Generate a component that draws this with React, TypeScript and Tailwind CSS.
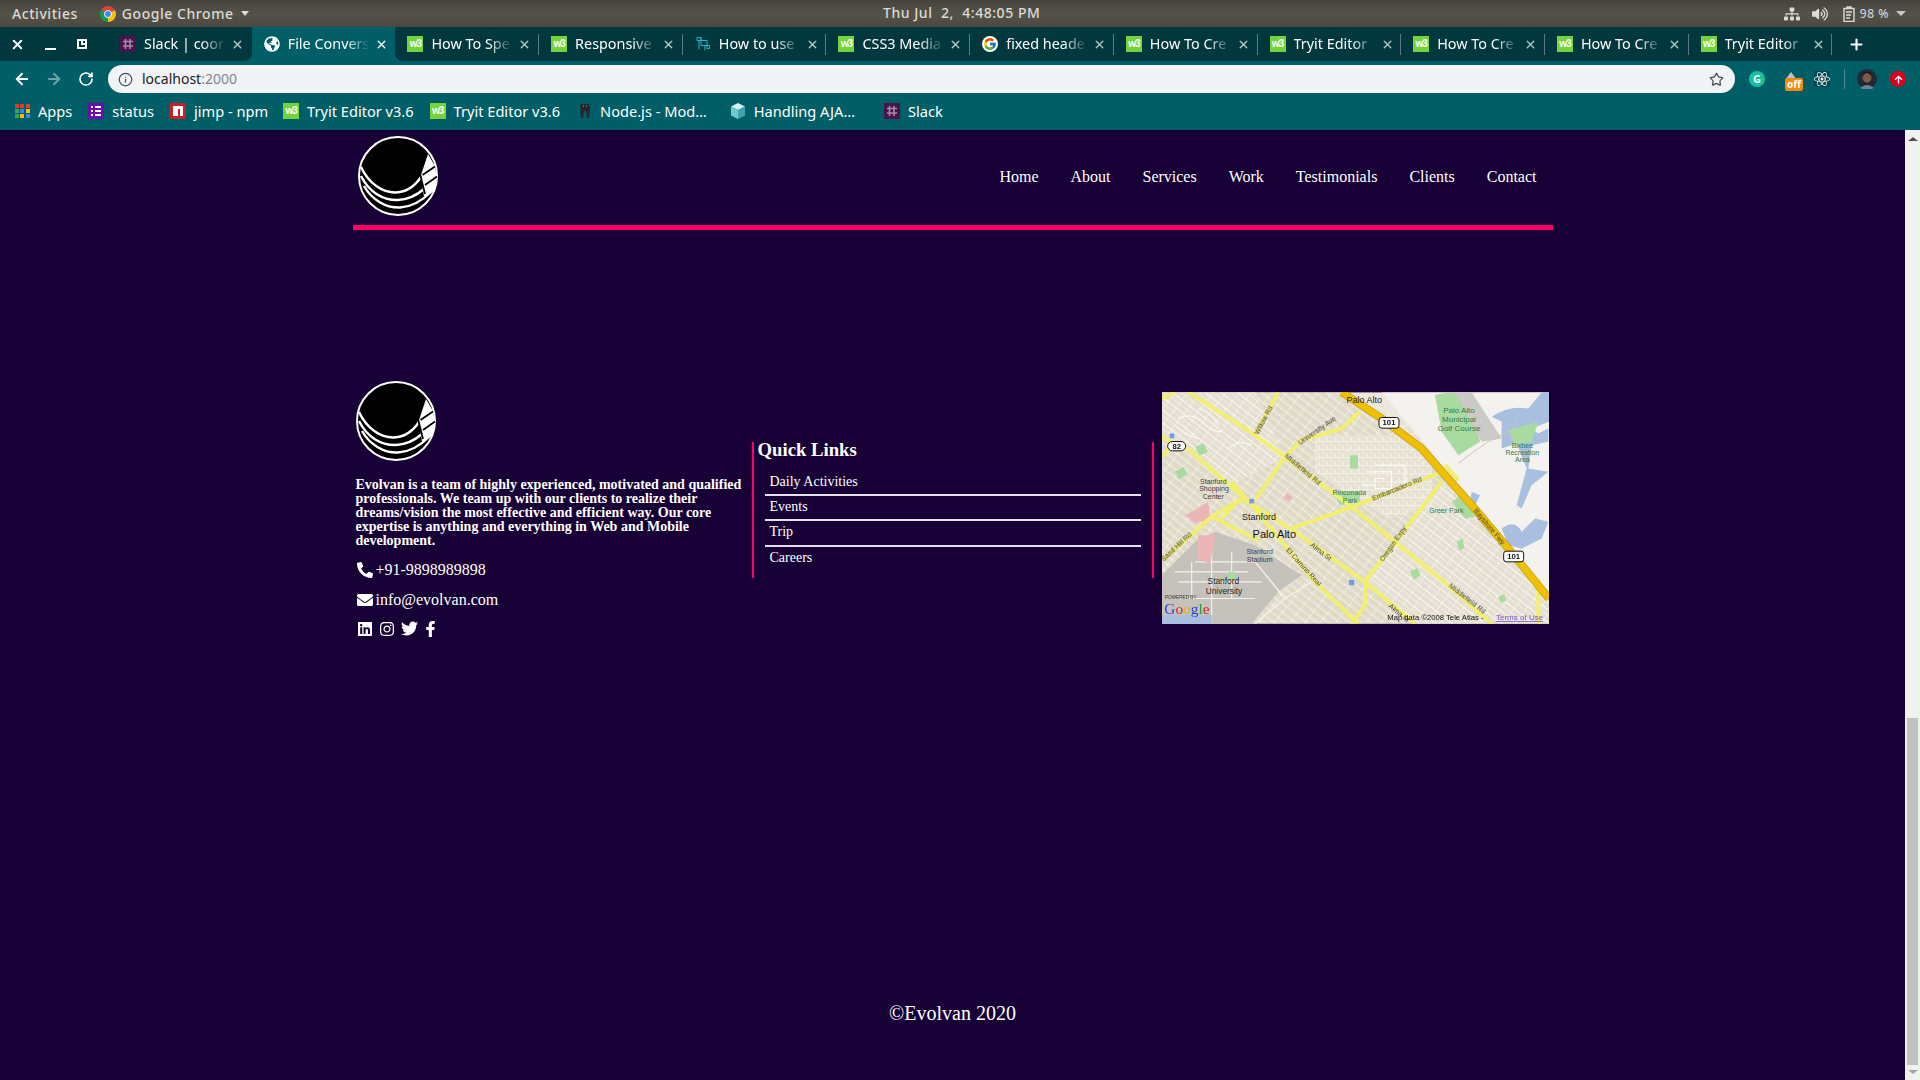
import React from "react";
import { FaPhoneAlt, FaEnvelope, FaLinkedin, FaInstagram, FaTwitter, FaFacebookF, FaReact, FaGlobeAmericas, FaVolumeUp, FaSitemap, FaArrowUp } from "react-icons/fa";
import { FcGoogle } from "react-icons/fc";
import { ArrowLeft, ArrowRight, RotateCw, Info, Star, X, Plus } from "lucide-react";

const W3 = () => (
  <span className="w-4 h-4 shrink-0 bg-[#73d53a] text-white text-[10px] font-bold leading-[15px] text-center tracking-[-1px] [font-family:'Liberation_Sans',sans-serif]">w3</span>
);
const SlackIcon = () => (
  <svg viewBox="0 0 16 16" className="w-4 h-4 shrink-0">
    <rect width="16" height="16" fill="#4a154b" />
    <path d="M5.5 3v10M10 3v10M3 5.5h10M3 10h10" stroke="#a58aa6" strokeWidth="1.6" />
  </svg>
);
const ChromeIcon = () => (
  <svg viewBox="0 0 16 16" className="w-4 h-4 shrink-0">
    <path d="M8 8 L1.1 4 A8 8 0 0 1 14.9 4 Z" fill="#db4437" />
    <path d="M8 8 L14.9 4 A8 8 0 0 1 8 16 Z" fill="#f4c20d" />
    <path d="M8 8 L8 16 A8 8 0 0 1 1.1 4 Z" fill="#0f9d58" />
    <circle cx="8" cy="8" r="3.8" fill="#fff" />
    <circle cx="8" cy="8" r="2.9" fill="#4285f4" />
  </svg>
);
const TreeIcon = () => (
  <svg viewBox="0 0 16 16" className="w-4 h-4 shrink-0" fill="none" stroke="#26b3c4" strokeWidth="1">
    <path d="M2 1.5h4v8h4v5M6 1.5v3h6v8h2.5v-3H10M2 1.5v3h4M4 4.5v9" />
  </svg>
);
const Logo = () => (
  <svg viewBox="0 0 80 80" className="w-20 h-20 shrink-0">
    <circle cx="40" cy="40" r="39" fill="#000" stroke="#fff" strokeWidth="2" />
    <path d="M63 39L70 18 77 30 79 42 76 55 66 61Z" fill="#fff" />
    <g fill="none" stroke="#fff" strokeWidth="2.4">
      <path d="M3 31C11 48 25 57 38 56.500C48 56 57 50 63 41" />
      <path d="M3 40C11 56 25 64.500 40 64C50 63.500 59 59 66 53" />
      <path d="M6 50C14 64 28 72 42 71.500C54 71 65 64 74 55" />
    </g>
    <g fill="none" stroke="#000" strokeWidth="1.8">
      <path d="M62 38L67 58" />
      <path d="M64.500 39L77 30.500" />
      <path d="M67 49L79 40.500" />
    </g>
  </svg>
);

const tabs: [React.ReactNode, string, string][] = [
  [<SlackIcon />, "Slack | coor", ""],
  [<FaGlobeAmericas className="w-4 h-4 shrink-0 text-white" />, "File Convers", "active"],
  [<W3 />, "How To Spe", ""],
  [<W3 />, "Responsive", ""],
  [<TreeIcon />, "How to use", ""],
  [<W3 />, "CSS3 Media", ""],
  [<span className="w-4 h-4 shrink-0 rounded-full bg-white flex items-center justify-center"><FcGoogle className="w-[14px] h-[14px]" /></span>, "fixed heade", ""],
  [<W3 />, "How To Cre", ""],
  [<W3 />, "Tryit Editor", ""],
  [<W3 />, "How To Cre", ""],
  [<W3 />, "How To Cre", ""],
  [<W3 />, "Tryit Editor", ""],
];

function TopBar() {
  return (
    <div className="h-[27px] shrink-0 flex items-center bg-gradient-to-b from-[#45433e] via-[#55524a] to-[#4c4942] text-[#dcdad3] text-[14px] font-medium tracking-[0.55px] pl-3 pr-[14px] relative [font-family:'Noto_Sans',sans-serif]">
      <span>Activities</span>
      <span className="ml-[22px] flex items-center gap-[6px]">
        <ChromeIcon />
        <span>Google Chrome</span>
        <span className="w-0 h-0 border-x-[4px] border-x-transparent border-t-[5px] border-t-[#dcdad3] ml-[1px]" />
      </span>
      <span className="absolute left-[883px] top-[4px] leading-[18px]">Thu Jul &nbsp;2, &nbsp;4:48:05 PM</span>
      <span className="ml-auto flex items-center">
        <FaSitemap className="w-[16px] h-[16px] text-[#dcdad3]" />
        <FaVolumeUp className="w-[16px] h-[16px] ml-[12px] text-[#dcdad3]" />
        <svg viewBox="0 0 12 16" className="w-3 h-4 ml-[15px]" fill="none" stroke="#dcdad3" strokeWidth="1.4">
          <path d="M1 2.5h10v13H1zM4 2.5V1h4v1.5M3 6h6M3 9h5M3 12h4" />
        </svg>
        <span className="ml-[5px] text-[12px] text-[#c9ced6]">98 %</span>
        <span className="ml-[7px] w-0 h-0 border-x-[5px] border-x-transparent border-t-[5px] border-t-[#c8c6c0]" />
      </span>
    </div>
  );
}

function TabStrip() {
  return (
    <div className="h-[34px] shrink-0 flex bg-[#005e66] [font-family:'Noto_Sans',sans-serif] text-[14.4px] text-white">
      <div className="w-[108px] bg-[#00383e] flex items-center">
        <X className="w-[15px] h-[15px] ml-[10px]" strokeWidth={3} />
        <span className="ml-[20px] w-[11px] h-[2px] bg-white mt-[9px]" />
        <span className="ml-[21px] w-[10px] h-[10px] border-2 border-white relative">
          <span className="absolute -top-[2px] -right-[2px] w-[6px] h-[6px] bg-[#00383e] border-2 border-white" />
        </span>
      </div>
      {tabs.map(([icon, title, state], i) => {
        const active = state === "active";
        return (
          <div
            key={i}
            className={`w-[143.7px] shrink-0 flex items-center pl-[12px] ${active ? "bg-[#005e66] rounded-t-lg" : "bg-[#00383e]"} ${i === 0 ? "rounded-br-lg" : ""} ${i === 2 ? "rounded-bl-lg" : ""}`}
          >
            {icon}
            <span className="ml-2 w-[80px] whitespace-nowrap [mask-image:linear-gradient(to_right,black_72%,transparent_102%)]">{title}</span>
            <X className={`w-[13px] h-[13px] ml-[7px] ${active ? "text-white" : "text-[#b5c5c7]"}`} strokeWidth={2.5} />
            <span className={`ml-auto w-px h-[21px] ${i >= 2 ? "bg-[#5b7c80]" : "bg-transparent"}`} />
          </div>
        );
      })}
      <div className="flex-1 bg-[#00383e] flex items-center">
        <Plus className="w-[17px] h-[17px] ml-[16px]" strokeWidth={3} />
      </div>
    </div>
  );
}

function Toolbar() {
  return (
    <div className="h-[32px] shrink-0 bg-[#005e66] flex items-end [font-family:'Noto_Sans',sans-serif]">
      <div className="w-[108px] h-[28px] flex items-center text-white pl-[13px]">
        <ArrowLeft className="w-[18px] h-[18px]" strokeWidth={2.5} />
        <ArrowRight className="w-[18px] h-[18px] ml-[14px] text-[#6fa2a6]" strokeWidth={2.5} />
        <RotateCw className="w-[16px] h-[16px] ml-[15px]" strokeWidth={2.5} />
      </div>
      <div className="w-[1627px] h-[28px] rounded-full bg-[#f1f3f4] flex items-center pl-[10px] pr-[11px] text-[14px]">
        <Info className="w-[15px] h-[15px] text-[#4a4d51]" strokeWidth={2} />
        <span className="ml-[9px] mb-[2px] text-[#202124]">localhost</span>
        <span className="mb-[2px] text-[#80868b]">:2000</span>
        <Star className="w-[15px] h-[15px] ml-auto text-[#4a4d51]" strokeWidth={2} />
      </div>
      <div className="flex-1 h-[28px] flex items-center relative">
        <span className="ml-[14px] w-4 h-4 rounded-full bg-[#15c39a] text-white text-[11px] font-bold leading-4 text-center">G</span>
        <span className="ml-[18px] relative w-4 h-4">
          <svg viewBox="0 0 16 16" className="w-4 h-4"><path d="M8 1l6 8v5H2V9z" fill="#b9c4c6" /></svg>
          <span className="absolute left-[2px] top-[7px] w-[18px] h-[13px] bg-[#f58a07] rounded-[2px] text-white text-[10px] font-bold leading-[12px] text-center">off</span>
        </span>
        <span className="ml-[15px] w-4 h-4 bg-[#04484e] flex items-center justify-center"><FaReact className="w-4 h-4 text-white" /></span>
        <span className="ml-[14px] w-px h-[20px] bg-[#4f8a8f]" />
        <svg viewBox="0 0 20 20" className="ml-[12px] w-5 h-5 -my-1">
          <circle cx="10" cy="10" r="10" fill="#1f2a36" />
          <ellipse cx="10" cy="9" rx="4.500" ry="5.500" fill="#7c5a4c" />
          <path d="M5.500 7Q10 1 14.500 7L14 5Q10 1 6 5Z" fill="#141113" />
          <path d="M6 11Q10 17 14 11L13 15H7Z" fill="#241d1d" />
          <path d="M3 19Q10 13 17 19L14 20H6Z" fill="#6d8598" />
        </svg>
        <span className="ml-[13px] w-4 h-4 rounded-full bg-[#d8001c] flex items-center justify-center"><FaArrowUp className="w-[9px] h-[9px] text-white" /></span>
      </div>
    </div>
  );
}

function Bookmarks() {
  const Item = ({ icon, label, ml }: { icon: React.ReactNode; label: string; ml: string }) => (
    <span className={`flex items-center gap-2 ${ml}`}>{icon}<span>{label}</span></span>
  );
  const colors = ["#e23b30", "#e23b30", "#e23b30", "#34a853", "#4285f4", "#fbbc05", "#34a853", "#fbbc05", "#4285f4"];
  return (
    <div className="h-[37px] shrink-0 bg-[#005e66] flex items-center text-white text-[14.6px] pl-[15px] [font-family:'Noto_Sans',sans-serif]">
      <Item ml="" label="Apps" icon={<span className="w-[15px] h-[14px] grid grid-cols-3 gap-px">{colors.map((c, i) => <span key={i} className="w-[4px] h-[4px]" style={{ backgroundColor: c }} />)}</span>} />
      <Item ml="ml-[16px]" label="status" icon={<svg viewBox="0 0 16 16" className="w-4 h-4"><rect width="16" height="16" fill="#6a0dad" /><path d="M3 4h2M7 4h6M3 8h2M7 8h6M3 12h2M7 12h6" stroke="#fff" strokeWidth="1.8" /></svg>} />
      <Item ml="ml-[16px]" label="jimp - npm" icon={<svg viewBox="0 0 16 16" className="w-4 h-4"><rect width="16" height="16" fill="#cb1f27" /><path d="M3 3h10v10h-3V6H8v7H3z" fill="#fff" /></svg>} />
      <Item ml="ml-[15px]" label="Tryit Editor v3.6" icon={<W3 />} />
      <Item ml="ml-4" label="Tryit Editor v3.6" icon={<W3 />} />
      <Item ml="ml-[18px]" label="Node.js - Mod…" icon={<svg viewBox="0 0 14 16" className="w-[14px] h-4"><path d="M3 1h8l1 4-1 10H9L8 8H6l-1 7H3L2 5z" fill="#24282c" /><path d="M5 3h1M8 3h1" stroke="#9aa" /></svg>} />
      <Item ml="ml-[23px]" label="Handling AJA…" icon={<svg viewBox="0 0 16 16" className="w-4 h-4"><path d="M8 0l7 3.500L8 7 1 3.500z" fill="#d5f2f4" /><path d="M1 3.500L8 7v9l-7-3.500z" fill="#6fc9d0" /><path d="M15 3.500L8 7v9l7-3.500z" fill="#3aa5ae" /></svg>} />
      <Item ml="ml-[29px]" label="Slack" icon={<SlackIcon />} />
    </div>
  );
}

function PaloAltoMap() {
  const label = "#3d3d3d";
  const park = "#2f7a4a";
  const yellow = "#f3ef6e";
  return (
    <svg viewBox="21 21 1161 695" className="w-[387px] h-[232px] shrink-0 mt-[11px] blur-[0.3px]" fontFamily="'Liberation Sans', sans-serif">
      <defs>
        <pattern id="blocks" width="36" height="20" patternUnits="userSpaceOnUse" patternTransform="rotate(38)">
          <rect width="36" height="20" fill="#e2dccb" />
          <path d="M0 0H36M0 0V20" stroke="#fff" strokeWidth="2.6" />
          <path d="M0 10H36" stroke="#cfc8b2" strokeWidth="1" />
        </pattern>
        <pattern id="blocks2" width="24" height="24" patternUnits="userSpaceOnUse">
          <rect width="24" height="24" fill="#e7e2d4" />
          <path d="M0 0H24M0 0V12" stroke="#fff" strokeWidth="2.6" />
          <path d="M12 12V24" stroke="#fff" strokeWidth="2" />
        </pattern>
        <pattern id="blocks3" width="30" height="30" patternUnits="userSpaceOnUse" patternTransform="rotate(-52)">
          <rect width="30" height="30" fill="#e4dfd0" />
          <path d="M0 0H30M0 0V30M15 0V30" stroke="#fff" strokeWidth="2.4" />
        </pattern>
        <clipPath id="mapclip"><rect x="21" y="21" width="1161" height="695" /></clipPath>
      </defs>
      <g clipPath="url(#mapclip)">
        <rect x="21" y="21" width="1161" height="695" fill="#ece8dd" />
        <path d="M21 21H560L850 250 1182 640V716H21Z" fill="url(#blocks)" />
        <path d="M21 21H300L390 215 230 300 21 155Z" fill="url(#blocks3)" />
        <path d="M630 590L860 290 1100 560 1182 640V716H780Z" fill="url(#blocks3)" />
        <path d="M480 150H830V360L700 400 480 260Z" fill="url(#blocks2)" />
        <path d="M720 60H830V210L740 130Z" fill="url(#blocks2)" />
        <g fill="none" stroke="#fff" strokeWidth="3">
          <path d="M770 70q30 10 40 40t20 50M790 60q40 30 50 100M750 90q40 20 50 70" />
          <path d="M640 260h70v50h-50v-30h30M660 240h90v70M620 300h40" />
          <path d="M70 100q40-20 70 10t60 30M130 70q40 10 60 50M220 190q30-30 70-10M60 120q30 30 70 40" />
        </g>
        <path d="M680 21H1182V640L870 250Z" fill="#f3f2ee" />
        <path d="M840 30Q880 15 950 30L975 170 910 210 860 140Z" fill="#a9dba0" />
        <path d="M950 21L1040 160 980 170 900 21Z" fill="#cbcac6" />
        <path d="M1010 95Q1060 60 1120 70L1160 21H1182V110L1130 130 1150 145 1180 130V170L1130 180 1120 250 1180 260 1130 300 1100 370 1085 360 1115 250 1085 175 1040 190 1040 110Z" fill="#a9bfe0" />
        <path d="M1060 135L1150 110 1130 170 1080 180Z" fill="#a9dba0" />
        <path d="M910 235q50-40 90-65l60-30q20-10 30-40" fill="none" stroke="#cfc8b2" strokeWidth="3" />
        <path d="M1040 430Q1080 400 1100 440L1140 400 1180 410 1160 460 1100 490 1060 480Z" fill="#a9bfe0" />
        <path d="M950 320L975 330 960 360 945 350Z" fill="#a9bfe0" />
        <path d="M890 350L920 330 960 395 930 400Z" fill="#a9dba0" />
        <path d="M21 570L120 470 180 440 300 480 440 570 370 620 290 716H21Z" fill="#c5c2bb" />
        <path d="M60 560H280M70 590H320M60 640H300M170 500V716M230 500V640M120 530H300M110 530V640" stroke="#f4f2ec" strokeWidth="3.5" fill="none" />
        <path d="M300 530L390 640 300 716M390 640L470 590" stroke="#f4f2ec" strokeWidth="4" fill="none" />
        <path d="M90 390L160 350 165 400 120 415Z" fill="#ecb6b6" />
        <path d="M130 450H182L165 535 125 520Z" fill="#ecb6b6" />
        <path d="M394 325l18 10-8 14-18-10z" fill="#ecb6b6" />
        <path d="M585 210h24v40h-24zM60 260l26-15 10 22-24 15zM120 185l25-10 14 25-25 12zM535 320l80 0 0 30-60 10zM765 560l22-12 10 22-20 14zM905 470l18-10 5 30-15 5zM220 560h20v25h-20zM1030 635l18-8 5 20-16 6z" fill="#a9dba0" />
        <g fill="none" stroke={yellow} strokeWidth="12" strokeLinejoin="round">
          <path d="M100 21L300 150 390 215 590 365 880 600 1010 716" />
          <path d="M21 155L110 200 280 350 420 440 630 590 780 716" />
          <path d="M230 290L390 480 480 590 610 716" />
          <path d="M410 430L590 365 850 265" />
          <path d="M630 590L860 290" />
          <path d="M300 345L390 215 440 165 560 130 615 80" />
          <path d="M300 150L370 21" />
          <path d="M21 525L170 395 250 345 290 350" />
          <path d="M170 395L310 465" />
          <path d="M250 345L200 400" />
          <path d="M630 590V660L590 716" />
          <path d="M21 215L60 170" />
          <path d="M870 240L910 285" />
          <path d="M1150 580V716" />
          <path d="M21 40L60 21" />
        </g>
        <path d="M560 21L680 100 800 190 870 270 950 360 1060 490 1182 640" fill="none" stroke="#b79a20" strokeWidth="24" />
        <path d="M560 21L680 100 800 190 870 270 950 360 1060 490 1182 640" fill="none" stroke="#f0c000" strokeWidth="20" />
        <g fill={label} fontSize="21">
          <text x="628" y="55" textAnchor="middle" fontSize="27" fill="#222">Palo Alto</text>
          <text x="912" y="83" textAnchor="middle" fontSize="24" fill={park}>Palo Alto</text>
          <text x="912" y="111" textAnchor="middle" fontSize="24" fill={park}>Municipal</text>
          <text x="912" y="139" textAnchor="middle" fontSize="24" fill={park}>Golf Course</text>
          <text x="1102" y="188" textAnchor="middle" fill={park}>Bixbee</text>
          <text x="1102" y="210" textAnchor="middle" fill={park}>Recreation</text>
          <text x="1102" y="232" textAnchor="middle" fill={park}>Area</text>
          <text x="175" y="296" textAnchor="middle">Stanford</text>
          <text x="177" y="319" textAnchor="middle">Shopping</text>
          <text x="175" y="342" textAnchor="middle">Center</text>
          <text x="312" y="405" textAnchor="middle" fontSize="27" fill="#222">Stanford</text>
          <text x="358" y="458" textAnchor="middle" fontSize="33" fill="#111">Palo Alto</text>
          <text x="314" y="507" textAnchor="middle">Stanford</text>
          <text x="314" y="530" textAnchor="middle">Stadium</text>
          <text x="205" y="598" textAnchor="middle" fontSize="25" fill="#222">Stanford</text>
          <text x="207" y="628" textAnchor="middle" fontSize="25" fill="#222">University</text>
          <text x="583" y="330" textAnchor="middle" fill={park}>Rinconada</text>
          <text x="585" y="353" textAnchor="middle" fill={park}>Park</text>
          <text x="874" y="384" textAnchor="middle" fill={park}>Greer Park</text>
          <text transform="translate(310 150) rotate(-62)">Willow Rd</text>
          <text transform="translate(436 180) rotate(-35)">University Ave</text>
          <text transform="translate(388 215) rotate(40)">Middlefield Rd</text>
          <text transform="translate(655 347) rotate(-22)">Embarcadero Rd</text>
          <text transform="translate(955 378) rotate(50)">Bayshore Fwy</text>
          <text transform="translate(685 530) rotate(-55)">Oregon Expy</text>
          <text transform="translate(465 482) rotate(38)">Alma St</text>
          <text transform="translate(392 495) rotate(48)">El Camino Real</text>
          <text transform="translate(26 530) rotate(-43)">Sand Hill Rd</text>
          <text transform="translate(880 605) rotate(38)">Middlefield Rd</text>
          <text transform="translate(700 665) rotate(40)">Alma St</text>
        </g>
        <g fontWeight="700" fontSize="23" textAnchor="middle">
          <rect x="672" y="97" width="60" height="32" rx="8" fill="#fff" stroke="#111" strokeWidth="3" />
          <text x="702" y="121" fill="#111">101</text>
          <rect x="1046" y="498" width="60" height="32" rx="8" fill="#fff" stroke="#111" strokeWidth="3" />
          <text x="1076" y="522" fill="#111">101</text>
          <rect x="38" y="169" width="54" height="28" rx="14" fill="#fff" stroke="#111" strokeWidth="3" />
          <text x="65" y="191" fill="#111">82</text>
        </g>
        <g fill="#7a9adf" stroke="#fff" strokeWidth="1">
          <rect x="43" y="144" width="16" height="16" />
          <rect x="282" y="340" width="16" height="16" />
          <rect x="581" y="583" width="18" height="18" />
        </g>
        <rect x="21" y="690" width="150" height="26" fill="#a9bfe0" />
        <text x="30" y="643" fontSize="14" fill="#333">POWERED BY</text>
        <text x="28" y="686" fontSize="46" fontFamily="'Liberation Serif', serif">
          <tspan fill="#2a3fd8">G</tspan><tspan fill="#d8232a">o</tspan><tspan fill="#e0b020">o</tspan><tspan fill="#2a3fd8">g</tspan><tspan fill="#2a9a3a">l</tspan><tspan fill="#d8232a">e</tspan>
        </text>
        <text x="697" y="705" fontSize="23" fill="#111">Map data ©2008 Tele Atlas -</text>
        <text x="1023" y="705" fontSize="24" fill="#7a55c8" textDecoration="underline">Terms of Use</text>
      </g>
    </svg>
  );
}

function Scrollbar() {
  return (
    <div className="w-[15px] shrink-0 bg-[#f1f1f1] flex flex-col items-center">
      <span className="mt-[7px] w-0 h-0 border-x-[5px] border-x-transparent border-b-[4px] border-b-[#505050]" />
      <span className="mt-[577px] w-[11px] h-[347px] bg-[#c1c1c1]" />
      <span className="mt-[5px] w-0 h-0 border-x-[5px] border-x-transparent border-t-[4px] border-t-[#a3a3a3]" />
    </div>
  );
}

export default function App() {
  const navItems = ["Home", "About", "Services", "Work", "Testimonials", "Clients", "Contact"];
  const links = ["Daily Activities", "Events", "Trip", "Careers"];
  return (
    <div className="w-[1920px] h-[1080px] overflow-hidden flex flex-col bg-[#170035]">
      <TopBar />
      <TabStrip />
      <Toolbar />
      <Bookmarks />
      <div className="flex-1 flex min-h-0">
        <main className="flex-1 min-w-0 text-white [font-family:'Liberation_Serif',serif]">
          <div className="w-[1200px] mx-auto">
            <header className="flex items-center justify-between border-b-[5px] border-[#ff0066] pt-[6px] pb-[9px] pl-[5px] pr-4">
              <Logo />
              <nav className="flex gap-8 text-base pt-[2px]">
                {navItems.map((n) => <a key={n}>{n}</a>)}
              </nav>
            </header>
            <section className="flex items-start mt-[151px]">
              <div className="w-[399px] pl-[3px] shrink-0">
                <Logo />
                <p className="mt-[17px] text-sm leading-[14px] font-bold pr-2">
                  Evolvan is a team of highly experienced, motivated and qualified professionals. We team up with our clients to realize their dreams/vision the most effective and efficient way. Our core expertise is anything and everything in Web and Mobile development.
                </p>
                <p className="mt-[10px] flex items-center text-base">
                  <FaPhoneAlt className="w-4 h-4 ml-px mr-[3px]" />+91-9898989898
                </p>
                <p className="mt-[6px] flex items-center text-base">
                  <FaEnvelope className="w-4 h-4 ml-px mr-[3px]" />info@evolvan.com
                </p>
                <div className="mt-[8px] flex items-center text-base">
                  <FaLinkedin className="w-4 h-4 ml-px" />
                  <FaInstagram className="w-4 h-4 ml-[6px]" />
                  <FaTwitter className="w-[17px] h-[17px] ml-[6px]" />
                  <FaFacebookF className="w-[15px] h-[16px] ml-[5px]" />
                </div>
              </div>
              <div className="w-[402px] h-[136px] mt-[61px] shrink-0 border-x-2 border-[#ff0066] pl-[4px]">
                <h3 className="text-[18.72px] leading-[16px] font-bold">Quick Links</h3>
                <ul className="mt-[12px] ml-[7px] w-[376px] text-sm">
                  {links.map((l, i) => (
                    <li key={l} className={`pl-[5px] h-[25.5px] ${i === 0 ? "leading-[23px]" : "leading-[21px]"} ${i < 3 ? "border-b-2 border-[#e4e1e8]" : ""}`}>{l}</li>
                  ))}
                </ul>
              </div>
              <div className="ml-[8px]">
                <PaloAltoMap />
              </div>
            </section>
            <footer className="mt-[365px] text-center text-xl leading-[23px]">©Evolvan 2020</footer>
          </div>
        </main>
        <Scrollbar />
      </div>
    </div>
  );
}
